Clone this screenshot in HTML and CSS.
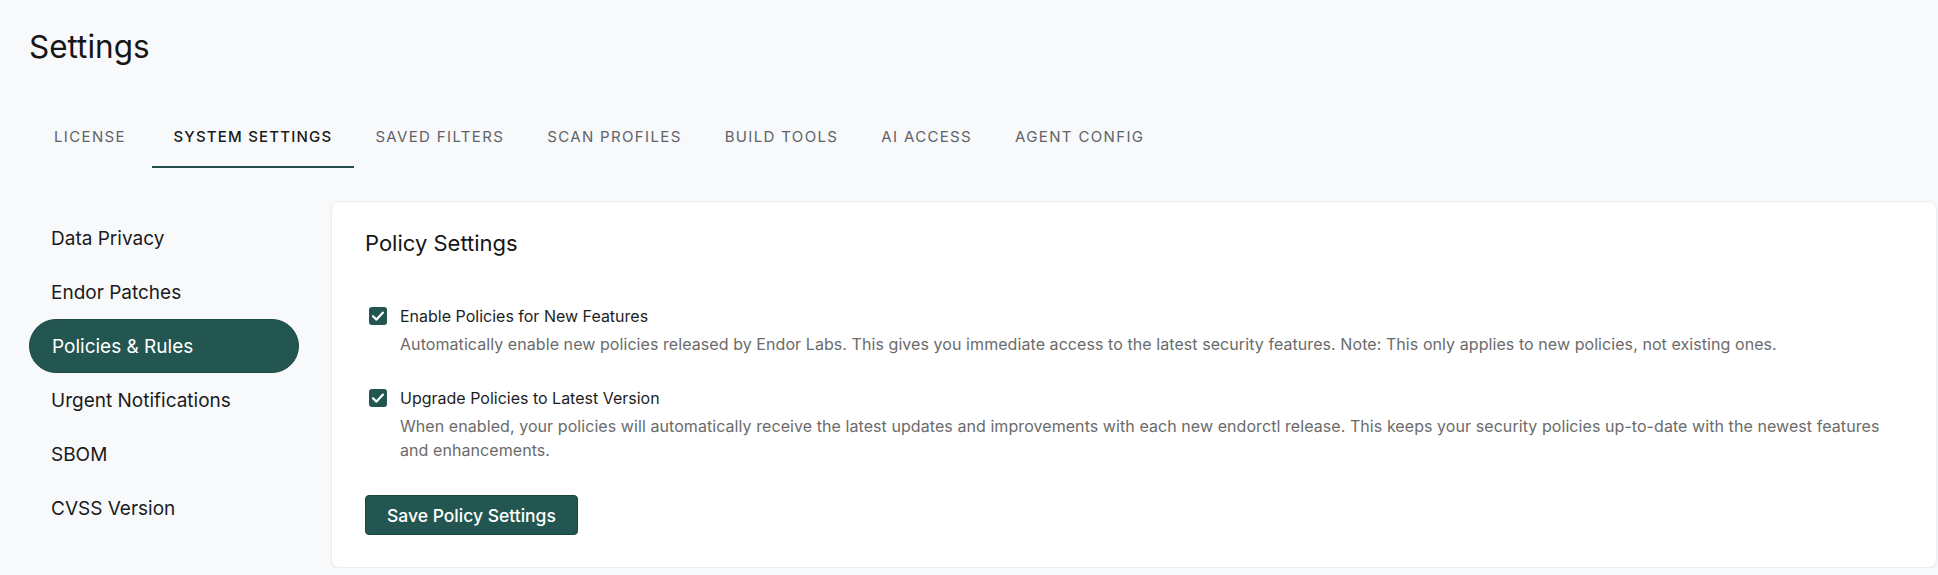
FILE: index.html
```html
<!DOCTYPE html>
<html lang="en">
<head>
<meta charset="utf-8">
<title>Settings</title>
<link rel="stylesheet" href="styles.css">
</head>
<body>
<div class="page">
  <h1 class="title">Settings</h1>
  <nav class="tabs">
    <div class="tab first">LICENSE</div>
    <div class="tab active">SYSTEM SETTINGS</div>
    <div class="tab">SAVED FILTERS</div>
    <div class="tab">SCAN PROFILES</div>
    <div class="tab">BUILD TOOLS</div>
    <div class="tab">AI ACCESS</div>
    <div class="tab">AGENT CONFIG</div>
  </nav>
  <div class="content">
    <aside class="sidebar">
      <div class="side-item">Data Privacy</div>
      <div class="side-item">Endor Patches</div>
      <div class="side-item active">Policies &amp; Rules</div>
      <div class="side-item">Urgent Notifications</div>
      <div class="side-item">SBOM</div>
      <div class="side-item">CVSS Version</div>
    </aside>
    <section class="card">
      <h2 class="card-title">Policy Settings</h2>
      <div class="option first">
        <span class="checkbox"><svg viewBox="0 0 18 18" width="18" height="18"><path d="M4 9.2 L7.5 12.6 L14 5.6" fill="none" stroke="#fff" stroke-width="2.2" stroke-linecap="round" stroke-linejoin="round"/></svg></span>
        <div class="option-text">
          <div class="option-label">Enable Policies for New Features</div>
          <div class="option-desc">Automatically enable new policies released by Endor Labs. This gives you immediate access to the latest security features. Note: This only applies to new policies, not existing ones.</div>
        </div>
      </div>
      <div class="option">
        <span class="checkbox"><svg viewBox="0 0 18 18" width="18" height="18"><path d="M4 9.2 L7.5 12.6 L14 5.6" fill="none" stroke="#fff" stroke-width="2.2" stroke-linecap="round" stroke-linejoin="round"/></svg></span>
        <div class="option-text">
          <div class="option-label">Upgrade Policies to Latest Version</div>
          <div class="option-desc">When enabled, your policies will automatically receive the latest updates and improvements with each new endorctl release. This keeps your security policies up-to-date with the newest features and enhancements.</div>
        </div>
      </div>
      <button class="save-btn" type="button">Save Policy Settings</button>
    </section>
  </div>
</div>
</body>
</html>
```

FILE: styles.css
```css
* { box-sizing: border-box; }

html, body {
  margin: 0;
  padding: 0;
  background: #f8f9fb;
  font-family: Inter, "Noto Sans", "Liberation Sans", sans-serif;
  color: #1b1b1b;
}

.page {
  padding: 0 1px 0 29px;
}

.title {
  margin: 28px 0 0 0;
  font-size: 31.5px;
  line-height: 38px;
  font-weight: 400;
  color: #161616;
}

.tabs {
  display: flex;
  margin: 49px 0 0 3.5px;
}

.tab {
  padding: 12px 21.5px 19px;
  font-size: 15px;
  line-height: 20px;
  letter-spacing: 1.35px;
  color: #606368;
  font-weight: 400;
  border-bottom: 2px solid transparent;
  white-space: nowrap;
}

.tab.first {
  padding-right: 26px;
}

.tab.active {
  color: #1a1a1a;
  font-weight: 500;
  letter-spacing: 1.2px;
  border-bottom-color: #1f4f4a;
}

.content {
  display: flex;
  gap: 32px;
  margin-top: 33px;
}

.sidebar {
  width: 270px;
  flex: none;
  padding-top: 10px;
  display: flex;
  flex-direction: column;
}

.side-item {
  height: 54px;
  display: flex;
  align-items: center;
  padding: 0 22px;
  font-size: 19px;
  color: #1b1b1b;
  border-radius: 27px;
}

.side-item.active {
  background: #235650;
  color: #ffffff;
  border: 1px solid #1d4a45;
}

.card {
  flex: 1;
  background: #ffffff;
  border: 1px solid #eceef1;
  border-radius: 8px;
  box-shadow: 0 1px 2px rgba(16, 24, 40, 0.05);
  padding: 27px 33px 32px 33px;
}

.card-title {
  margin: 0;
  font-size: 22px;
  line-height: 28px;
  font-weight: 400;
  color: #161616;
}

.option {
  display: flex;
  align-items: flex-start;
  margin-top: 30px;
}

.option.first {
  margin-top: 47px;
}

.checkbox {
  flex: none;
  width: 18px;
  height: 18px;
  margin: 3px 13px 0 4px;
  background: #235650;
  border-radius: 3px;
  display: flex;
  align-items: center;
  justify-content: center;
}

.checkbox svg { display: block; }

.option-label {
  font-size: 16px;
  line-height: 24px;
  color: #1e1e1e;
}

.option-desc {
  margin-top: 4px;
  font-size: 16px;
  line-height: 24px;
  letter-spacing: 0.07px;
  color: #6b6b6b;
}

.save-btn {
  margin-top: 33px;
  height: 40px;
  padding: 0 21px;
  background: #235650;
  color: #ffffff;
  border: 1px solid #1b4540;
  border-radius: 4px;
  font-family: Inter, "Noto Sans", "Liberation Sans", sans-serif;
  font-size: 17.5px;
  font-weight: 500;
  cursor: pointer;
}
```
